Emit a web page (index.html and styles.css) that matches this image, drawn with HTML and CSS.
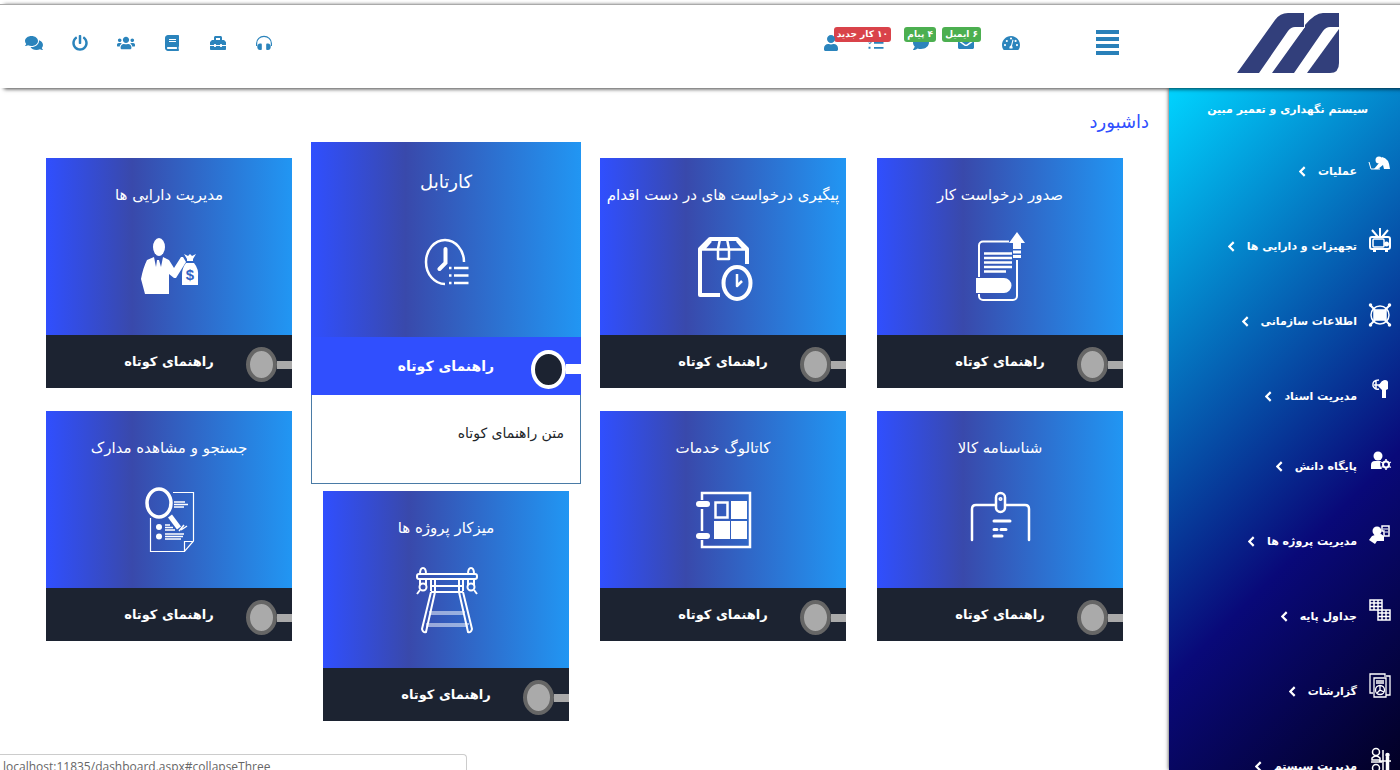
FILE: index.html
```html
<!DOCTYPE html>
<html lang="fa" dir="rtl">
<head>
<meta charset="utf-8">
<title>داشبورد</title>
<meta name="viewport" content="width=device-width, initial-scale=1">
<link rel="stylesheet" href="styles.css">
</head>
<body>
<header class="topbar">
  <a class="brand" href="#" aria-label="مبین">
    <svg class="brand-logo" viewBox="0 0 103 60" fill="#323f7b" aria-hidden="true">
      <path d="M0 60L38 7Q43 0 51 0H67V14H58Q54 14 51 18L22 60Z"/>
      <path d="M35 60L68 14V12Q78 0 86 0H102V14H93Q89 14 86 18L57 60Z"/>
      <path d="M70 60L102 16V50Q102 60 93 60Z"/>
      <path d="M67.500 0V14L61 22" fill="none" stroke="#fff"/>
    </svg>
  </a>
  <button class="menu-toggle" type="button" aria-label="منو"><span></span><span></span><span></span><span></span></button>
  <nav class="tools tools-main" aria-label="اعلان‌ها">
    <a href="#" aria-label="داشبورد"><svg viewBox="0 0 576 512"><path fill-rule="evenodd" d="M288 32C129 32 0 161 0 320c0 53 14 102 39 145 6 9 16 15 28 15h442c12 0 22-6 28-15 25-43 39-92 39-145C576 161 447 32 288 32zm0 45a34 34 0 1 1 0 68 34 34 0 0 1 0-68zM96 289a34 34 0 1 1 0 68 34 34 0 0 1 0-68zm58-133a34 34 0 1 1 0 68 34 34 0 0 1 0-68zm325 133a34 34 0 1 1 0 68 34 34 0 0 1 0-68zm-38-133a34 34 0 1 1-30 58 34 34 0 0 1 30-58zm-104-10l32 10-50 194c20 20 27 44 16 80H241c-12-50 10-90 47-98z"/></svg></a>
    <a href="#" aria-label="ایمیل"><svg viewBox="0 0 512 512"><path d="M48 64h416c26 0 48 22 48 48v20L290 298c-20 15-48 15-68 0L0 132v-20c0-26 22-48 48-48zM0 190l195 145c36 27 86 27 122 0l195-145v210c0 26-22 48-48 48H48c-26 0-48-22-48-48z"/></svg><span class="badge badge-green">۶ ایمیل</span></a>
    <a href="#" aria-label="پیام"><svg viewBox="0 0 512 512"><path d="M256 32C115 32 0 125 0 240c0 50 21 95 57 131-13 50-54 95-55 96-4 6-2 13 6 13 66 0 116-32 140-51 33 12 69 19 108 19 141 0 256-93 256-208S397 32 256 32z"/></svg><span class="badge badge-green">۴ پیام</span></a>
    <a href="#" aria-label="کار جدید"><svg viewBox="0 0 512 512"><path d="M10 94l22-22 26 26 60-66 22 22-80 88zM10 250l22-22 26 26 60-66 22 22-80 88zM16 376h64v64H16zM192 64h304v60H192zm0 156h304v60H192zm0 160h304v60H192z"/></svg><span class="badge badge-red">۱۰ کار جدید</span></a>
    <a href="#" aria-label="کاربر"><svg viewBox="0 0 448 512"><path d="M224 256c70.700 0 128-57.300 128-128S294.700 0 224 0 96 57.300 96 128s57.300 128 128 128zm89.600 32h-16.700c-22.200 10.200-46.900 16-72.900 16s-50.600-5.800-72.900-16h-16.700C60.200 288 0 348.200 0 422.400V464c0 26.500 21.500 48 48 48h352c26.500 0 48-21.500 48-48v-41.600c0-74.200-60.200-134.400-134.400-134.400z"/></svg></a>
  </nav>
  <nav class="tools tools-side" aria-label="ابزارها">
    <a href="#" aria-label="پشتیبانی"><svg viewBox="0 0 512 512"><path d="M20 350V262a236 220 0 0 1 472 0v88" fill="none" stroke="currentColor" stroke-width="38"/><path d="M128 272h24c20 0 34 16 34 34v140c0 20-14 34-34 34h-24C76 480 40 440 40 376s36-104 88-104zm256 0h-24c-20 0-34 16-34 34v140c0 20 14 34 34 34h24c52 0 88-40 88-104s-36-104-88-104z"/></svg></a>
    <a href="#" aria-label="جعبه ابزار"><svg viewBox="0 0 512 512"><path d="M502.630 214.630l-45.250-45.250c-6-6-14.140-9.370-22.630-9.370H384V80c0-26.510-21.490-48-48-48H176c-26.510 0-48 21.490-48 48v80H77.250c-8.490 0-16.620 3.370-22.630 9.370L9.370 214.630c-6 6-9.370 14.140-9.370 22.630V320h128v-16c0-8.840 7.160-16 16-16h32c8.840 0 16 7.160 16 16v16h128v-16c0-8.840 7.160-16 16-16h32c8.840 0 16 7.160 16 16v16h128v-82.750c0-8.480-3.370-16.620-9.370-22.620zM320 160H192V96h128v64zm64 208c0 8.840-7.160 16-16 16h-32c-8.840 0-16-7.160-16-16v-16H192v16c0 8.840-7.160 16-16 16h-32c-8.840 0-16-7.160-16-16v-16H0v96c0 17.670 14.330 32 32 32h448c17.670 0 32-14.330 32-32v-96H384v16z"/></svg></a>
    <a href="#" aria-label="کتاب"><svg viewBox="0 0 448 512"><path d="M448 360V24c0-13.300-10.700-24-24-24H96C43 0 0 43 0 96v320c0 53 43 96 96 96h328c13.300 0 24-10.700 24-24v-16c0-7.500-3.500-14.300-8.900-18.700-4.200-15.400-4.200-59.300 0-74.700 5.400-4.300 8.900-11.100 8.900-18.600zM128 134c0-3.300 2.700-6 6-6h212c3.300 0 6 2.700 6 6v20c0 3.300-2.700 6-6 6H134c-3.300 0-6-2.700-6-6v-20zm0 64c0-3.300 2.700-6 6-6h212c3.300 0 6 2.700 6 6v20c0 3.300-2.700 6-6 6H134c-3.300 0-6-2.700-6-6v-20zm253.400 250H96c-17.700 0-32-14.300-32-32 0-17.600 14.400-32 32-32h285.400c-1.900 17.100-1.900 46.900 0 64z"/></svg></a>
    <a href="#" aria-label="کاربران"><svg viewBox="0 0 640 512"><path d="M96 224c35.300 0 64-28.700 64-64s-28.700-64-64-64-64 28.700-64 64 28.700 64 64 64zm448 0c35.300 0 64-28.700 64-64s-28.700-64-64-64-64 28.700-64 64 28.700 64 64 64zm32 32h-64c-17.600 0-33.500 7.100-45.100 18.600 40.300 22.100 68.900 62 75.100 109.400h66c17.700 0 32-14.300 32-32v-32c0-35.300-28.700-64-64-64zm-256 0c61.900 0 112-50.100 112-112S381.900 32 320 32 208 82.100 208 144s50.100 112 112 112zm76.800 32h-8.300c-20.800 10-43.900 16-68.500 16s-47.600-6-68.500-16h-8.300C179.600 288 128 339.600 128 403.200V432c0 26.500 21.500 48 48 48h288c26.500 0 48-21.500 48-48v-28.800c0-63.600-51.600-115.200-115.200-115.200zm-223.700-13.400C161.500 263.100 145.600 256 128 256H64c-35.300 0-64 28.700-64 64v32c0 17.700 14.300 32 32 32h65.900c6.300-47.400 34.900-87.300 75.200-109.400z"/></svg></a>
    <a href="#" aria-label="خروج"><svg viewBox="0 0 512 512"><path d="M400 54.100c63 45 104 118.600 104 201.900 0 136.800-110.800 247.700-247.500 248C120 504.300 8.200 393 8 256.400 7.900 173.100 48.900 99.300 111.800 54.200c11.700-8.300 28-4.800 35 7.700L162.600 90c5.900 10.500 3.100 23.800-6.600 31-41.500 30.800-68 79.600-68 134.900-.1 92.300 74.500 168.100 168 168.100 91.600 0 168.600-74.200 168-169.100-.3-51.800-24.700-101.800-68.100-134-9.700-7.200-12.400-20.500-6.500-30.900l15.800-28.100c7-12.400 23.200-16.100 34.800-7.800zM296 264V24c0-13.300-10.700-24-24-24h-32c-13.300 0-24 10.700-24 24v240c0 13.300 10.700 24 24 24h32c13.300 0 24-10.700 24-24z"/></svg></a>
    <a href="#" aria-label="گفتگو"><svg viewBox="0 0 576 512"><path d="M416 192c0-88.400-93.100-160-208-160S0 103.600 0 192c0 34.300 14.100 65.900 38 92-13.400 30.200-35.500 54.200-35.800 54.500-2.200 2.300-2.800 5.700-1.500 8.700S4.800 352 8 352c36.600 0 66.900-12.300 88.700-25 32.200 15.700 70.300 25 111.300 25 114.900 0 208-71.600 208-160zm122 220c23.900-26 38-57.700 38-92 0-66.900-53.500-124.200-129.300-148.100.9 6.600 1.300 13.300 1.300 20.100 0 105.900-107.700 192-240 192-10.800 0-21.300-.8-31.700-1.900C207.800 439.600 281.800 480 368 480c41 0 79.100-9.200 111.300-25 21.800 12.700 52.100 25 88.700 25 3.200 0 6.100-1.900 7.300-4.800 1.300-2.900.7-6.300-1.500-8.700-.3-.3-22.400-24.200-35.800-54.500z"/></svg></a>
  </nav>
</header>

<div class="layout">
  <aside class="sidebar">
    <h2 class="sidebar-title">سیستم نگهداری و تعمیر مبین</h2>
    <ul class="side-nav">
      <li><a href="#"><svg class="side-icon" viewBox="0 0 24 26" fill="#fff"><circle cx="11" cy="8" r="3.500"/><path d="M14 5q7 1 8 12h-6l-1-4-5 4H6l5-6z"/><path d="M1 10l2 7h9" fill="none" stroke="#fff"/></svg>عملیات<svg class="chev" viewBox="0 0 6 10"><path d="M5 1L1 5l4 4"/></svg></a></li>
      <li><a href="#"><svg class="side-icon" viewBox="0 0 24 26" fill="none" stroke="#fff" stroke-width="2"><rect x="2" y="10" width="20" height="12" rx="2"/><rect x="5" y="12" width="11" height="8" rx="1" stroke-width="1.500"/><path d="M12 10V1M10 10L4 3M14 10l6-7M5 24h3M17 24h3"/><circle cx="18.500" cy="17" r="1.500" fill="#fff"/></svg>تجهیزات و دارایی ها<svg class="chev" viewBox="0 0 6 10"><path d="M5 1L1 5l4 4"/></svg></a></li>
      <li><a href="#"><svg class="side-icon" viewBox="0 0 24 26" fill="none" stroke="#fff" stroke-width="1.500"><circle cx="12" cy="13" r="9"/><path d="M2 3l5 5M22 3l-5 5M2 23l5-5M22 23l-5-5" stroke-width="2"/><path d="M6 8h12v10H6z" fill="#fff"/><g fill="#fff"><circle cx="2.500" cy="3" r="1"/><circle cx="21.500" cy="3" r="1"/><circle cx="2.500" cy="23" r="1"/><circle cx="21.500" cy="23" r="1"/></g></svg>اطلاعات سازمانی<svg class="chev" viewBox="0 0 6 10"><path d="M5 1L1 5l4 4"/></svg></a></li>
      <li class="compact"><a href="#"><svg class="side-icon" viewBox="0 0 24 26" fill="#fff"><path d="M14 4h4q2 0 2 3v5l-2 1v8h-4v-8l-4-4z"/><path d="M11 3Q4 3 5 9q2 4 6 3M8 4v8M6 8h6" fill="none" stroke="#fff" stroke-width="1.500"/><circle cx="17" cy="6" r="3"/></svg>مدیریت اسناد<svg class="chev" viewBox="0 0 6 10"><path d="M5 1L1 5l4 4"/></svg></a></li>
      <li><a href="#"><svg class="side-icon" viewBox="0 0 24 26" fill="#fff"><circle cx="10" cy="9" r="4.500"/><path d="M3 22v-4q0-4 4-4h6q-2 4 1 8z"/><circle cx="18" cy="17.500" r="3" fill="none" stroke="#fff" stroke-width="2"/><path d="M18 12v2m0 7v2m-4.700-8l1.500 1m6.500 3.500l1.500 1m0-5.500l-1.500 1m-6.500 3.500l-1.500 1" stroke="#fff" stroke-width="1.500"/></svg>پایگاه دانش<svg class="chev" viewBox="0 0 6 10"><path d="M5 1L1 5l4 4"/></svg></a></li>
      <li><a href="#"><svg class="side-icon" viewBox="0 0 24 26" fill="#fff"><circle cx="9" cy="9" r="4.500"/><path d="M4 14q4-2 9-2l3 2v5H9l-2 3-6-4z"/><path d="M14 4h7v10h-5V9h-2z" fill="none" stroke="#fff" stroke-width="1.500"/><path d="M15 7h5M17 10h3" stroke="#fff"/></svg>مدیریت پروژه ها<svg class="chev" viewBox="0 0 6 10"><path d="M5 1L1 5l4 4"/></svg></a></li>
      <li><a href="#"><svg class="side-icon" viewBox="0 0 24 26" fill="none" stroke="#fff" stroke-width="1.500"><path d="M2 3h12v10H2zM2 6h12M2 9.500h12M6 3v10M10 3v10M10 13h12v10H10zM10 16h12M10 19.500h12M14 13v10M18 13v10"/></svg>جداول پایه<svg class="chev" viewBox="0 0 6 10"><path d="M5 1L1 5l4 4"/></svg></a></li>
      <li><a href="#"><svg class="side-icon" viewBox="0 0 24 26" fill="none" stroke="#fff" stroke-width="1.300"><path d="M5 21H2V2h15v3M18 4h4v19h-4M6 6h12v19H6zM8 9h8M8 11h8"/><circle cx="12" cy="18" r="4.500"/><path d="M12 13v5l4 2M12 18l-3 3"/></svg>گزارشات<svg class="chev" viewBox="0 0 6 10"><path d="M5 1L1 5l4 4"/></svg></a></li>
      <li><a href="#"><svg class="side-icon" viewBox="0 0 24 26" fill="none" stroke="#fff" stroke-width="1.500"><circle cx="8" cy="5" r="3.500"/><path d="M4 13v-2q4-4 8 0v2zM3 15h11M15 3v20M11 14h12"/><circle cx="8" cy="21" r="3.500"/><circle cx="19.500" cy="8" r="1.500" fill="#fff"/><path d="M19.500 10v13" stroke-width="3.500"/></svg>مدیریت سیستم<svg class="chev" viewBox="0 0 6 10"><path d="M5 1L1 5l4 4"/></svg></a></li>
    </ul>
  </aside>

  <main class="content">
    <h1 class="page-title">داشبورد</h1>
    <div class="board">
      <div class="column">
        <article class="card">
          <a class="card-head" href="#"><span class="card-title">صدور درخواست کار</span>
            <svg class="card-icon" viewBox="965 232 70 70" fill="#fff"><path d="M1009 241.500H983a4 4 0 0 0-4 4V277M979 294v2a4 4 0 0 0 4 4h30a4 4 0 0 0 4-4V260" fill="none" stroke="#fff" stroke-width="2"/><path d="M1017 232l8 11h-4v6h-8v-6h-4zM1013 250.500h8v3h-8zM1013 255h8v3h-8z"/><path d="M984 253.500h28M984 258h28M984 262.500h28M984 267h28M984 271.500h22" stroke="#fff" stroke-width="2.500"/><path d="M976 278h28a7.500 7.500 0 0 1 0 15h-28z"/></svg></a>
          <button class="card-help" type="button" aria-expanded="false"><span class="knob"></span><span>راهنمای کوتاه</span></button>
        </article>
        <article class="card">
          <a class="card-head" href="#"><span class="card-title">شناسنامه کالا</span>
            <svg class="card-icon" viewBox="965 485 70 70" fill="none" stroke="#fff" stroke-width="2.500" stroke-linecap="round"><path d="M972 540v-31q0-4 4-4h19M1006 505h19q4 0 4 4v31"/><rect x="996" y="493" width="9" height="19" rx="4.500"/><circle cx="1000.500" cy="499" r=".8"/><path d="M994 521h16M994 529.500h3M1001 529.500h5M994 536h8" stroke-width="3"/></svg></a>
          <button class="card-help" type="button" aria-expanded="false"><span class="knob"></span><span>راهنمای کوتاه</span></button>
        </article>
      </div>
      <div class="column">
        <article class="card">
          <a class="card-head" href="#"><span class="card-title">پیگیری درخواست های در دست اقدام</span>
            <svg class="card-icon" viewBox="688 232 70 70" fill="none" stroke="#fff" stroke-width="4" stroke-linejoin="round"><path d="M720 295H700V249l10-10h27l10 10v15"/><path d="M700 249.500h46M720 239l-2 10v10h11V249l-2-10M704 249l7-8M744 249l-7-8" stroke-width="2.500"/><ellipse cx="737" cy="283" rx="13.500" ry="16"/><path d="M737 274v12l5-5" stroke-width="2.500"/></svg></a>
          <button class="card-help" type="button" aria-expanded="false"><span class="knob"></span><span>راهنمای کوتاه</span></button>
        </article>
        <article class="card">
          <a class="card-head" href="#"><span class="card-title">کاتالوگ خدمات</span>
            <svg class="card-icon" viewBox="688 485 70 70" fill="#fff"><path d="M702 500v-7h48v54h-48v-7M702 509v22" fill="none" stroke="#fff" stroke-width="2.500"/><rect x="696" y="501" width="14" height="6" rx="3"/><rect x="696" y="533" width="14" height="6" rx="3"/><path d="M731 501h16v18h-16zM714 521h16v18h-16zM731 521h16v18h-16z"/><path d="M715.500 502.500h12v15h-12z" fill="none" stroke="#fff" stroke-width="2.500"/></svg></a>
          <button class="card-help" type="button" aria-expanded="false"><span class="knob"></span><span>راهنمای کوتاه</span></button>
        </article>
      </div>
      <div class="column">
        <article class="card card-open">
          <a class="card-head" href="#"><span class="card-title">کارتابل</span>
            <svg class="card-icon" viewBox="411 227 70 70" fill="none" stroke="#fff" stroke-width="2.500"><path d="M464 262A19 22 0 1 0 445 284"/><path d="M445.500 249v14l-6 6" stroke-width="4" stroke-linecap="round"/><path d="M454 268h14.500M454 275.500h14.500M454 283h14.500M449 268h2.500M449 275.500h2.500M449 283h2.500"/></svg></a>
          <button class="card-help" type="button" aria-expanded="true" aria-controls="inbox-help"><span class="knob"></span><span>راهنمای کوتاه</span></button>
          <p class="card-text" id="inbox-help">متن راهنمای کوتاه</p>
        </article>
        <article class="card">
          <a class="card-head" href="#"><span class="card-title">میزکار پروژه ها</span>
            <svg class="card-icon" viewBox="411 565 70 70" fill="none" stroke="#fff" stroke-width="2"><rect x="417" y="574" width="60" height="5" rx="2"/><path d="M420 574q0-6 3-6t3 6M468 574q0-6 3-6t3 6M431 579v12M435 579v12M459 579v12M463 579v12M431 586h32M431 592h32"/><path d="M431 592l-9 37q1 4 4 3l9-40M463 592l9 37q-1 4-4 3l-9-40"/><path d="M429 612h36M430 614h34M426 624h43M426 626h42" stroke-width="1"/><circle cx="423" cy="587" r="3.500"/><circle cx="471" cy="587" r="3.500"/><path d="M420 580v5M426 580v5M468 580v5M474 580v5M420 590l-3 4M474 590l3 4"/></svg></a>
          <button class="card-help" type="button" aria-expanded="false"><span class="knob"></span><span>راهنمای کوتاه</span></button>
        </article>
      </div>
      <div class="column">
        <article class="card">
          <a class="card-head" href="#"><span class="card-title">مدیریت دارایی ها</span>
            <svg class="card-icon" viewBox="134 232 70 70" fill="#fff"><ellipse cx="159" cy="247" rx="6" ry="9"/><path d="M154 257l-7 3q-4 8-6 19l4 15h24v-20l5 4h2l10-16-3-5h-2l-7 11-5-8-6-3-2 10-2-7h-2l-1 7z"/><path d="M184 254l4 2 2-2 2 2 4-2-3 5v2h-6v-2zM186 263h8q5 6 4 14v8h-16v-10q0-7 4-12z"/><text x="190" y="280" text-anchor="middle" font-family="Liberation Sans" font-weight="700" font-size="15" fill="#3363c4">$</text></svg></a>
          <button class="card-help" type="button" aria-expanded="false"><span class="knob"></span><span>راهنمای کوتاه</span></button>
        </article>
        <article class="card">
          <a class="card-head" href="#"><span class="card-title">جستجو و مشاهده مدارک</span>
            <svg class="card-icon" viewBox="134 485 70 70" fill="none" stroke="#fff"><path d="M173 492.500h20.500V541l-9 10.500h-34V518M184.500 551v-9.500h9" stroke-width="1.200"/><ellipse cx="159" cy="503" rx="12" ry="14" stroke-width="3.500"/><path d="M170 516l9 12" stroke-width="5"/><path d="M174 502h11M174 504.500h14M174 507h10M165 525h5M165 527.500h8M165 530h10M181 530l6-4M179 531l5-6M165 534h19M165 536.500h18M165 539h16" stroke-width="1.500"/><g fill="#fff" stroke="none"><circle cx="159" cy="527" r="3"/><circle cx="159" cy="536.500" r="3"/></g></svg></a>
          <button class="card-help" type="button" aria-expanded="false"><span class="knob"></span><span>راهنمای کوتاه</span></button>
        </article>
      </div>
    </div>
  </main>
</div>

<div class="status" dir="ltr">localhost:11835/dashboard.aspx#collapseThree</div>
</body>
</html>
```

FILE: styles.css
```css
*, *::before, *::after { box-sizing: border-box; }

body {
  margin: 0;
  height: 100vh;
  overflow: hidden;
  display: flex;
  flex-direction: column;
  background: #fff;
  font-family: "DejaVu Sans", sans-serif;
  color: #212529;
}

a { color: inherit; text-decoration: none; }
button { font: inherit; border: 0; padding: 0; cursor: pointer; }

/* Top bar */
.topbar {
  position: relative;
  z-index: 2;
  flex: none;
  display: flex;
  align-items: center;
  margin-top: 4px;
  height: 84px;
  padding-left: 25px;
  padding-bottom: 8px;
  border-top: 1px solid #aaa;
  background: #fff;
  box-shadow: 4px 1px 4px rgba(0, 0, 0, .75);
}
.brand {
  flex: none;
  width: 231px;
  padding-right: 60px;
  display: flex;
}
.brand-logo { width: 103px; height: 60px; }
.menu-toggle {
  display: flex;
  flex-direction: column;
  gap: 3px;
  width: 23px;
  margin-right: 50px;
  margin-left: 76px;
  background: none;
}
.menu-toggle span { height: 4px; background: #2980b9; }
.tools { display: flex; color: #2b84bc; }
.tools a {
  position: relative;
  width: 18px;
  height: 18px;
  display: flex;
  justify-content: center;
  align-items: center;
}
.tools svg { height: 16px; fill: currentColor; }
.tools-main { gap: 27px; }
.tools-side { gap: 28px; margin-right: auto; }
.badge {
  position: absolute;
  right: -6px;
  top: -7px;
  padding: 0 3px;
  border-radius: 3px;
  font-size: 9px;
  font-weight: 700;
  line-height: 15px;
  white-space: nowrap;
  color: #fff;
}
.badge-green { background: #4caf50; }
.badge-red { background: #d9434a; }

/* Page frame */
.layout { flex: 1; min-height: 0; display: flex; }

/* Sidebar */
.sidebar {
  flex: none;
  width: 231px;
  overflow: hidden;
  color: #fff;
  background: linear-gradient(315deg, #020024 0%, #090979 35%, #00d4ff 100%);
  box-shadow: 0 0 4px rgba(0, 0, 0, .8);
}
.sidebar-title {
  margin: 0;
  padding: 10px 32px 0 0;
  font-size: 11px;
  line-height: 24px;
  font-weight: 700;
}
.side-nav { list-style: none; margin: 0; padding: 29px 8px 0 0; }
.side-nav li { height: 75px; }
.side-nav .compact { height: 70px; }
.side-nav a {
  display: flex;
  align-items: center;
  height: 40px;
  font-size: 11px;
  font-weight: 700;
}
.side-icon { width: 24px; height: 26px; margin: 0 0 12px 11px; }
.chev {
  width: 7px;
  height: 11px;
  margin-right: 12px;
  fill: none;
  stroke: #fff;
  stroke-width: 2;
}

/* Dashboard */
.content { flex: 1; min-width: 0; padding: 20px 46px 0; }
.page-title {
  margin: 0 -26px 22px 0;
  font-size: 18px;
  line-height: 28px;
  font-weight: 400;
  color: #304ffe;
}
.board {
  display: grid;
  grid-template-columns: repeat(4, minmax(0, 1fr));
  gap: 31px;
  align-items: start;
}
.column { display: flex; flex-direction: column; gap: 23px; }
.card-head {
  display: flex;
  flex-direction: column;
  align-items: center;
  gap: 24px;
  padding: 24px 0 33px;
  background: linear-gradient(90deg, #304ffe 0%, #3949ab 35%, #2196f3 100%);
  color: #fff;
}
.card-title { font-size: 15px; line-height: 26px; white-space: nowrap; }
.card-icon { width: 70px; height: 70px; }
.card-help {
  display: grid;
  grid-template-columns: 46px 1fr 46px;
  align-items: center;
  width: 100%;
  height: 53px;
  background: #1c2331;
  color: #fff;
  font-size: 13px;
  font-weight: 700;
}
.knob {
  display: flex;
  align-items: center;
  padding-top: 6px;
}
.knob::before { content: ""; width: 15px; height: 8px; background: #aaa; }
.knob::after {
  content: "";
  width: 31px;
  height: 35px;
  border: 4px solid #666;
  border-radius: 50%;
  background: #aaa;
}

.card-open { margin: -16px -12px; }
.card-open .card-head { gap: 32px; padding: 27px 0 40px; }
.card-open .card-title { font-size: 18px; }
.card-open .card-help {
  grid-template-columns: 50px 1fr 50px;
  height: 58px;
  background: #304ffe;
  font-size: 14px;
}
.card-open .knob::before { height: 10px; background: #fff; }
.card-open .knob::after {
  width: 35px;
  height: 39px;
  border-color: #fff;
  background: #1c2331;
}
.card-text {
  margin: 0;
  height: 89px;
  padding: 24px 16px;
  border: 1px solid #4a7ba6;
  border-top: 0;
  background: #fff;
  font-size: 14px;
  line-height: 28px;
}

/* Browser link preview */
.status {
  position: fixed;
  left: 0;
  bottom: 0;
  width: 467px;
  height: 16px;
  padding: 3px 3px 0;
  overflow: hidden;
  border: 1px solid #ccc;
  border-width: 1px 1px 0 0;
  border-radius: 0 4px 0 0;
  background: #fff;
  color: #666;
  font: 12px/18px "Open Sans", sans-serif;
}
```
